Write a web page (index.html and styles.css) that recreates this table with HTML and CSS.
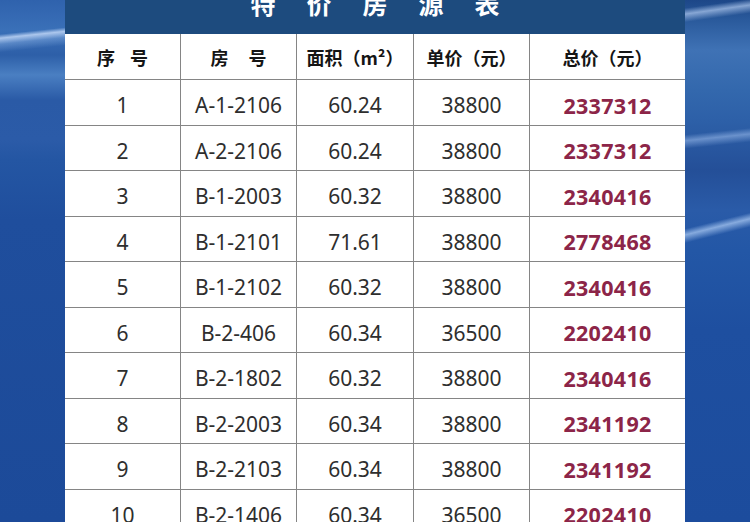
FILE: index.html
```html
<!DOCTYPE html>
<html lang="zh">
<head>
<meta charset="utf-8">
<title>特价房源表</title>
<link rel="stylesheet" href="styles.css">
</head>
<body>
<div class="page">
  <div class="side side-left"></div>
  <main class="sheet">
    <div class="banner"><h1 class="title">特价房源表</h1></div>
    <table class="grid">
      <colgroup>
        <col class="c1"><col class="c2"><col class="c3"><col class="c4"><col class="c5">
      </colgroup>
      <thead>
        <tr>
          <th>序<span class="gap1"></span>号</th>
          <th>房<span class="gap2"></span>号</th>
          <th>面积（m²）</th>
          <th>单价（元）</th>
          <th>总价（元）</th>
        </tr>
      </thead>
      <tbody>
        <tr><td>1</td><td>A-1-2106</td><td>60.24</td><td>38800</td><td class="total">2337312</td></tr>
        <tr><td>2</td><td>A-2-2106</td><td>60.24</td><td>38800</td><td class="total">2337312</td></tr>
        <tr><td>3</td><td>B-1-2003</td><td>60.32</td><td>38800</td><td class="total">2340416</td></tr>
        <tr><td>4</td><td>B-1-2101</td><td>71.61</td><td>38800</td><td class="total">2778468</td></tr>
        <tr><td>5</td><td>B-1-2102</td><td>60.32</td><td>38800</td><td class="total">2340416</td></tr>
        <tr><td>6</td><td>B-2-406</td><td>60.34</td><td>36500</td><td class="total">2202410</td></tr>
        <tr><td>7</td><td>B-2-1802</td><td>60.32</td><td>38800</td><td class="total">2340416</td></tr>
        <tr><td>8</td><td>B-2-2003</td><td>60.34</td><td>38800</td><td class="total">2341192</td></tr>
        <tr><td>9</td><td>B-2-2103</td><td>60.34</td><td>38800</td><td class="total">2341192</td></tr>
        <tr><td>10</td><td>B-2-1406</td><td>60.34</td><td>36500</td><td class="total">2202410</td></tr>
      </tbody>
    </table>
  </main>
  <div class="side side-right"></div>
</div>
</body>
</html>
```

FILE: styles.css
```css
html, body {
  margin: 0;
  padding: 0;
  background: #1d4c9c;
}

.page {
  display: grid;
  grid-template-columns: 65px 620px 65px;
  width: 750px;
  height: 522px;
  overflow: hidden;
}

.side {
  height: 522px;
}

.side-left {
  background:
    linear-gradient(174deg, transparent 0 34px, rgba(210,228,255,0.75) 38px, rgba(160,195,240,0.35) 44px, transparent 52px),
    linear-gradient(180deg, #2f62ad 0px, #3a70b8 30px, #2d5fa8 55px, #4a7fc2 75px, #2a5aa6 100px, #2b5ba8 140px, #2456a3 160px, #1f4e9d 220px, #1c4a99 522px);
}

.side-right {
  background:
    linear-gradient(172deg, transparent 0 8px, rgba(200,222,255,0.6) 14px, transparent 22px),
    linear-gradient(174deg, transparent 0 134px, rgba(170,200,245,0.5) 140px, transparent 148px),
    linear-gradient(166deg, transparent 0 222px, rgba(175,205,245,0.7) 228px, transparent 236px),
    linear-gradient(180deg, #1d4788 0px, #2a5a9c 20px, #3f72b5 50px, #3368ad 90px, #2d60a8 120px, #244f98 170px, #2a5ba8 210px, #2357a6 250px, #1e4fa0 330px, #1c4c9d 522px);
}

.sheet {
  display: flex;
  flex-direction: column;
  background: #ffffff;
}

.banner {
  height: 34px;
  background: #1d4b7e;
  display: flex;
  justify-content: center;
  align-items: flex-start;
  overflow: hidden;
}

.title {
  margin: -12px 0 0 0;
  padding-left: 31px;
  font-family: "Noto Sans CJK SC", "Noto Sans", sans-serif;
  font-size: 25px;
  line-height: 30px;
  font-weight: 700;
  color: #ffffff;
  letter-spacing: 31px;
}

.grid {
  table-layout: fixed;
  width: 620px;
  border-collapse: separate;
  border-spacing: 0;
}

.c1 { width: 116px; }
.c2 { width: 116px; }
.c3 { width: 117px; }
.c4 { width: 116px; }
.c5 { width: 155px; }

th, td {
  box-sizing: border-box;
  text-align: center;
  border-right: 1px solid #858585;
  border-bottom: 1px solid #858585;
  padding: 0;
}

th:last-child, td:last-child {
  border-right: none;
}

th {
  height: 46px;
  font-family: "Noto Sans CJK SC", "Noto Sans", sans-serif;
  font-size: 18px;
  font-weight: 700;
  color: #151515;
  padding-top: 1px;
}

.gap1 {
  display: inline-block;
  width: 15px;
}

.gap2 {
  display: inline-block;
  width: 20px;
}

td {
  height: 45.5px;
  font-family: "Noto Sans", "Open Sans", sans-serif;
  font-size: 21px;
  font-weight: 400;
  color: #2e2e2e;
  padding-top: 6px;
}

td.total {
  font-weight: 700;
  font-size: 21.5px;
  color: #8c2548;
  letter-spacing: 0.3px;
}
```
